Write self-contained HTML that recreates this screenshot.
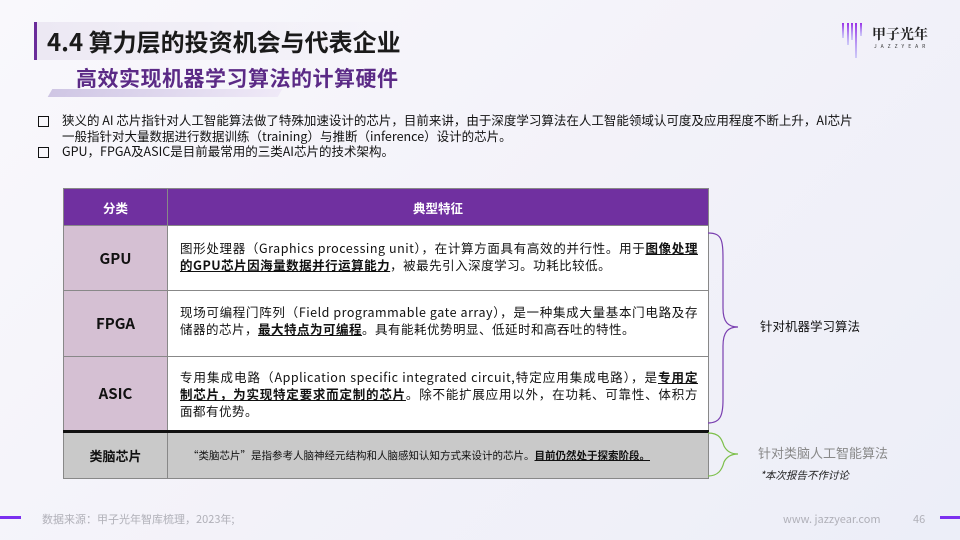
<!DOCTYPE html>
<html><head><meta charset="utf-8"><style>
*{margin:0;padding:0;box-sizing:border-box}
body{width:960px;height:540px;overflow:hidden;position:relative;background:linear-gradient(135deg,#f9f8fc 0%,#f3f2f9 50%,#eceef8 100%);font-family:"Noto Sans CJK SC","Liberation Sans",sans-serif;color:#111}
.abs{position:absolute}
.title{left:34px;top:22px;height:38px;width:370px;border-left:3px solid #6a2c9a;background:linear-gradient(90deg,#ece8f3,rgba(240,238,246,0));font-size:24px;font-weight:bold;line-height:38px;padding-left:10px;color:#1a1a1a}
.sub{left:76px;top:63px;font-size:21px;font-weight:bold;color:#5b2a86;letter-spacing:0.5px;line-height:30px}
.bar1{left:50px;top:89px;width:230px;height:8px;background:linear-gradient(90deg,#cfc6e4,#efe9f7);transform:skewX(-30deg)}
.bullets{left:38px;top:112px;font-size:12.5px;line-height:15.5px;width:870px;color:#111}
.bullets p{padding-left:24px;position:relative}
.bullets p:before{content:"";position:absolute;left:0;top:4px;width:9px;height:9px;border:1.8px solid #111}
table{position:absolute;left:63px;top:188px;width:646px;border-collapse:collapse;font-size:12.5px}
td,th{border:1px solid #888}
th{background:#7030a0;color:#fff;height:37px;font-size:12.5px}
td.k{width:104px;background:#d5c0d3;text-align:center;font-weight:bold;font-size:15px}
td.v{background:#fff;padding:0 10px 0 12px;line-height:17px;text-align:justify;letter-spacing:0.5px}
tr.r td{border-bottom:1px dashed #777}
.last td{background:#c9c9c9;height:47px}
.last td.k{background:#c9c9c9;font-size:13px}
.last td.v{background:#c9c9c9;font-size:10.5px;padding-left:20px;letter-spacing:0}
u{font-weight:bold}
.foot{font-size:11px;color:#b0b0b8;line-height:14px}
</style></head><body>
<div class="abs title">4.4 算力层的投资机会与代表企业</div>
<div class="abs bar1"></div>
<div class="abs sub">高效实现机器学习算法的计算硬件</div>
<div class="abs" style="left:842px;top:22px;">
<svg width="22" height="36"><defs><linearGradient id="g" x1="0" y1="0" x2="0" y2="1"><stop offset="0" stop-color="#9a2ee8"/><stop offset="1" stop-color="#9a8ff5" stop-opacity="0.4"/></linearGradient></defs>
<rect x="0" y="1" width="2" height="15" fill="url(#g)"/><rect x="5" y="1" width="2" height="22" fill="url(#g)"/><rect x="9" y="1" width="2" height="17" fill="url(#g)"/><rect x="13" y="1" width="2" height="35" fill="url(#g)"/><rect x="18" y="1" width="2" height="13" fill="url(#g)"/></svg></div>
<div class="abs" style="left:872px;top:24px;font-size:14px;font-family:'Noto Serif CJK SC',serif;font-weight:bold;color:#222;line-height:20px">甲子光年</div>
<div class="abs" style="left:874px;top:43px;font-size:5px;letter-spacing:4px;color:#333">JAZZYEAR</div>
<div class="abs bullets">
<p>狭义的 AI 芯片指针对人工智能算法做了特殊加速设计的芯片，目前来讲，由于深度学习算法在人工智能领域认可度及应用程度不断上升，AI芯片<br>一般指针对大量数据进行数据训练（training）与推断（inference）设计的芯片。</p>
<p>GPU，FPGA及ASIC是目前最常用的三类AI芯片的技术架构。</p>
</div>
<table>
<tr><th>分类</th><th>典型特征</th></tr>
<tr class="r" style="height:65px"><td class="k">GPU</td><td class="v" style="vertical-align:top;padding-top:13px">图形处理器（Graphics processing unit），在计算方面具有高效的并行性。用于<u>图像处理的GPU芯片因海量数据并行运算能力</u>，被最先引入深度学习。功耗比较低。</td></tr>
<tr class="r" style="height:66px"><td class="k">FPGA</td><td class="v" style="vertical-align:top;padding-top:12px">现场可编程门阵列（Field programmable gate array），是一种集成大量基本门电路及存储器的芯片，<u>最大特点为可编程</u>。具有能耗优势明显、低延时和高吞吐的特性。</td></tr>
<tr style="height:75px"><td class="k" style="border-bottom:3px solid #111">ASIC</td><td class="v" style="border-bottom:3px solid #111">专用集成电路（Application specific integrated circuit,特定应用集成电路），是<u>专用定制芯片，为实现特定要求而定制的芯片</u>。除不能扩展应用以外，在功耗、可靠性、体积方面都有优势。</td></tr>
<tr class="last"><td class="k">类脑芯片</td><td class="v">“类脑芯片”是指参考人脑神经元结构和人脑感知认知方式来设计的芯片。<u>目前仍然处于探索阶段。</u></td></tr>
</table>
<svg class="abs" style="left:706px;top:230px" width="40" height="260">
<path d="M2 3 C18 3 17 12 17 40 L17 78 C17 92 22 97 32 97 C22 97 17 102 17 116 L17 170 C17 186 14 193 2 193" fill="none" stroke="#7a3fb0" stroke-width="1.2"/>
<path d="M2 203 C14 203 16 210 18 216 C21 222 26 224 32 224 C26 224 21 226 18 232 C16 240 12 246 2 246" fill="none" stroke="#7cbf4a" stroke-width="1.2"/>
</svg>
<div class="abs" style="left:760px;top:318px;font-size:12.5px;line-height:16px">针对机器学习算法</div>
<div class="abs" style="left:758px;top:444px;font-size:13px;color:#888;line-height:17px">针对类脑人工智能算法</div>
<div class="abs" style="left:760px;top:469px;font-size:10.5px;font-style:italic;color:#222;line-height:14px">*本次报告不作讨论</div>
<div class="abs" style="left:0;top:516px;width:21px;height:3px;background:#7b2ff0"></div>
<div class="abs foot" style="left:42px;top:512px">数据来源：甲子光年智库梳理，2023年;</div>
<div class="abs foot" style="left:783px;top:512px">www. jazzyear.com</div>
<div class="abs foot" style="left:913px;top:512px">46</div>
<div class="abs" style="left:940px;top:516px;width:20px;height:3px;background:#7b2ff0"></div>
</body></html>
